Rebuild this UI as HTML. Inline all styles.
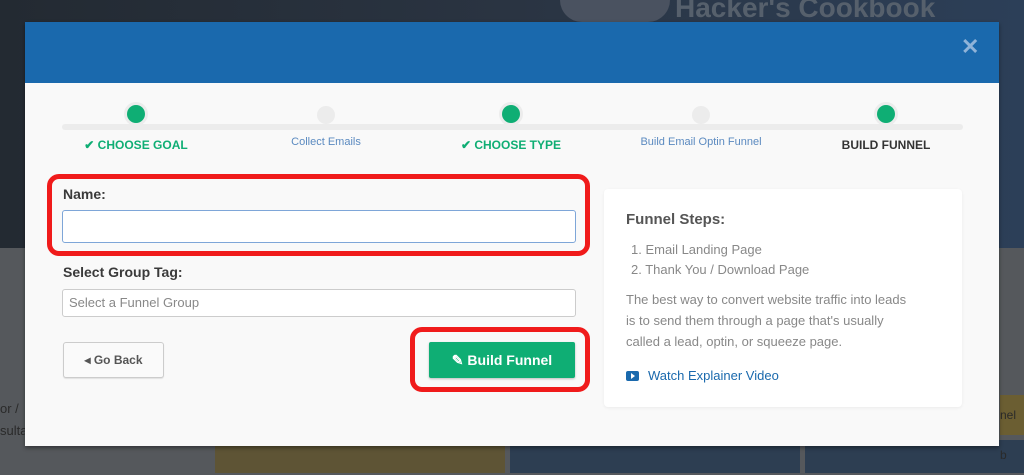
<!DOCTYPE html>
<html><head><style>
body{margin:0;width:1024px;height:473px;overflow:hidden;position:relative;font-family:"Liberation Sans",sans-serif;background:#55585c}
.abs{position:absolute}
</style></head><body>
<div class="abs" style="left:0;top:0;width:1024px;height:248px;background:linear-gradient(90deg,#232a32,#2a3442 50%,#2c3f58)"></div>
<div class="abs" style="left:560px;top:0;width:110px;height:22px;background:#4a5260;border-radius:0 0 40px 40px"></div>
<div class="abs" style="left:675px;top:-8px;font-size:28px;font-weight:bold;color:#56606c">Hacker's Cookbook</div>
<div class="abs" style="left:0;top:375px;width:215px;height:98px;background:#55585c"></div>
<div class="abs" style="left:0;top:398px;color:#2a2a2a;font-size:13px;line-height:22px">or /<br>sultant</div>
<div class="abs" style="left:215px;top:440px;width:290px;height:33px;background:#5e5435"></div>
<div class="abs" style="left:510px;top:440px;width:290px;height:33px;background:#2d3e52"></div>
<div class="abs" style="left:805px;top:440px;width:219px;height:33px;background:#2d3e52"></div>
<div class="abs" style="left:1000px;top:395px;width:24px;height:40px;background:#6b5e32;color:#2a2a2a;font-size:12px;line-height:40px">nel b</div>

<div class="abs" style="left:25px;top:22px;width:974px;height:424px;background:#f9f9f9;box-shadow:0 2px 4px rgba(0,0,0,.4)">
 <div class="abs" style="left:0;top:0;width:974px;height:61px;background:#1a69ad"></div>
 <div class="abs" style="left:936px;top:12px;color:#8fb3d8;font-size:22px;font-weight:bold">✕</div>
 <div class="abs" style="left:37px;top:102px;width:901px;height:6px;background:#ececec;border-radius:3px"></div>
 <div class="abs" style="left:99px;top:80px;width:24px;height:24px;border-radius:50%;background:#ececec"><div style="margin:3px;width:18px;height:18px;border-radius:50%;background:#0fae74"></div></div>
 <div class="abs" style="left:292px;top:84px;width:18px;height:18px;border-radius:50%;background:#ececec"></div>
 <div class="abs" style="left:474px;top:80px;width:24px;height:24px;border-radius:50%;background:#ececec"><div style="margin:3px;width:18px;height:18px;border-radius:50%;background:#0fae74"></div></div>
 <div class="abs" style="left:667px;top:84px;width:18px;height:18px;border-radius:50%;background:#ececec"></div>
 <div class="abs" style="left:849px;top:80px;width:24px;height:24px;border-radius:50%;background:#ececec"><div style="margin:3px;width:18px;height:18px;border-radius:50%;background:#0fae74"></div></div>
 <div class="abs" style="left:36px;top:116px;width:150px;text-align:center;color:#0fae74;font-size:12px;font-weight:bold">✔ CHOOSE GOAL</div>
 <div class="abs" style="left:226px;top:114px;width:150px;text-align:center;color:#5b8ac0;font-size:11px">Collect Emails</div>
 <div class="abs" style="left:411px;top:116px;width:150px;text-align:center;color:#0fae74;font-size:12px;font-weight:bold">✔ CHOOSE TYPE</div>
 <div class="abs" style="left:586px;top:114px;width:180px;text-align:center;color:#5b8ac0;font-size:11px">Build Email Optin Funnel</div>
 <div class="abs" style="left:786px;top:116px;width:150px;text-align:center;color:#333;font-size:12px;font-weight:bold">BUILD FUNNEL</div>

 <div class="abs" style="left:22px;top:152px;width:533px;height:72px;border:5px solid #f01b1b;border-radius:12px"></div>
 <div class="abs" style="left:38px;top:164px;font-size:14px;font-weight:bold;color:#3a3a3a">Name:</div>
 <div class="abs" style="left:37px;top:188px;width:512px;height:31px;background:#fff;border:1px solid #7ea6d8;border-radius:3px"></div>
 <div class="abs" style="left:38px;top:242px;font-size:14px;font-weight:bold;color:#3a3a3a">Select Group Tag:</div>
 <div class="abs" style="left:37px;top:267px;height:26px;background:#fff;border:1px solid #ccc;border-radius:3px;font-size:13px;color:#888;line-height:26px;padding-left:6px;width:506px">Select a Funnel Group</div>
 <div class="abs" style="left:38px;top:320px;width:99px;height:34px;background:#fafafa;border:1px solid #ccc;border-radius:3px;box-shadow:0 1px 1px rgba(0,0,0,.1);font-size:12px;font-weight:bold;color:#555;text-align:center;line-height:34px">◂ Go Back</div>
 <div class="abs" style="left:385px;top:305px;width:170px;height:55px;border:5px solid #f01b1b;border-radius:12px"></div>
 <div class="abs" style="left:404px;top:320px;width:146px;height:36px;background:#0fae74;border-radius:2px;box-shadow:0 1px 2px rgba(0,0,0,.25);color:#fff;font-size:14px;font-weight:bold;text-align:center;line-height:36px">✎ Build Funnel</div>

 <div class="abs" style="left:579px;top:167px;width:358px;height:218px;background:#fff;border-radius:4px;box-shadow:0 1px 3px rgba(0,0,0,.06);color:#888;font-size:13px">
  <div class="abs" style="left:22px;top:22px;font-size:15px;font-weight:bold;color:#555">Funnel Steps:</div>
  <div class="abs" style="left:27px;top:51px;line-height:20px">1. Email Landing Page<br>2. Thank You / Download Page</div>
  <div class="abs" style="left:22px;top:100px;line-height:21px;width:330px;white-space:nowrap">The best way to convert website traffic into leads<br>is to send them through a page that's usually<br>called a lead, optin, or squeeze page.</div>
  <div class="abs" style="left:22px;top:182px;width:13px;height:10px;background:#1a69ad;border-radius:2px"></div>
  <div class="abs" style="left:27px;top:184px;width:0;height:0;border-left:4px solid #fff;border-top:3px solid transparent;border-bottom:3px solid transparent"></div>
  <div class="abs" style="left:44px;top:179px;color:#1a69ad">Watch Explainer Video</div>
 </div>
</div>
</body></html>
